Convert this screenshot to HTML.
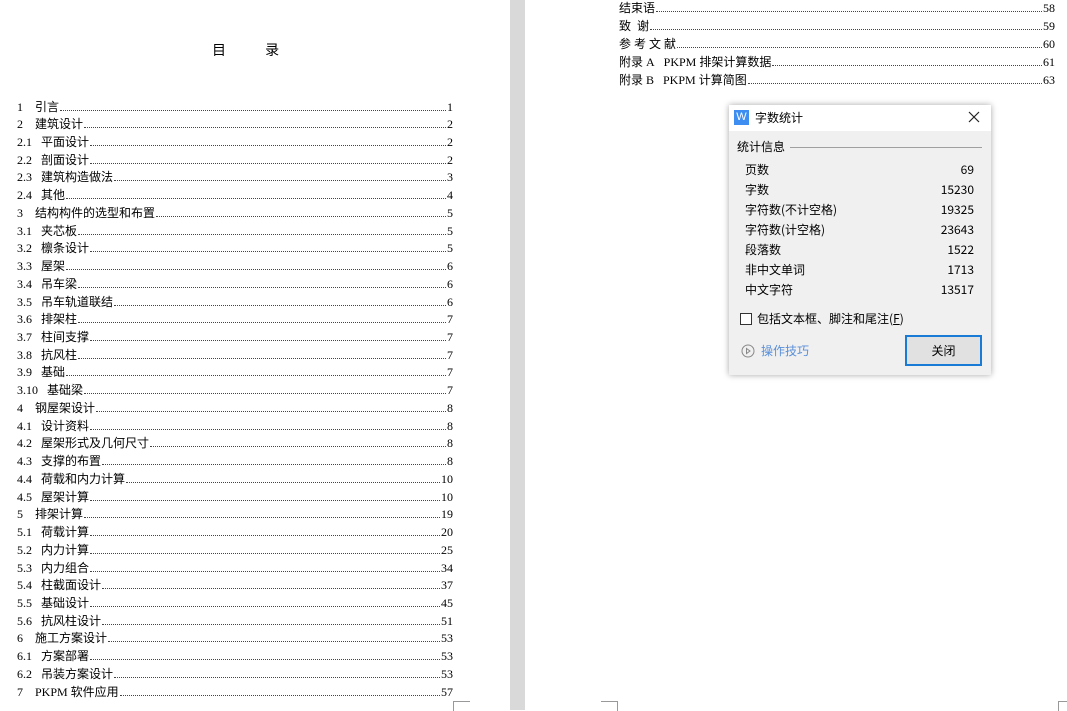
<!DOCTYPE html>
<html><head><meta charset="utf-8"><style>
*{margin:0;padding:0;box-sizing:border-box}
body{width:1067px;height:710px;overflow:hidden;background:#fff;position:relative;font-family:"Liberation Serif","Noto Sans CJK SC",serif;font-size:12px;color:#000}
.gap{position:absolute;left:510px;top:0;width:15px;height:710px;background:#d9d9d9}
.row{position:absolute;height:18px;line-height:18px;display:flex;white-space:nowrap}
.row .n{display:inline-block}
.row .t{font-family:"Liberation Serif","Noto Sans CJK SC",sans-serif}
.row .d{flex:1;border-bottom:1px dotted #444;margin:0 1px 5px 1px}
.L{left:17px;width:436px}
.R{left:619px;width:436px}
.title{position:absolute;left:212px;top:40px;font-size:14px;font-family:"Noto Sans CJK SC",sans-serif;letter-spacing:18px}
.mk{position:absolute;border-color:#999;border-style:solid;width:17px;height:10px}
.dlg{position:absolute;left:729px;top:105px;width:262px;height:270px;background:#f0f0f0;box-shadow:0 0 6px rgba(0,0,0,.35);font-family:"Noto Sans CJK SC",sans-serif;font-size:12px;color:#000}
.tb{height:26px;background:#fff;position:relative}
.ic{position:absolute;left:5px;top:5px;width:15px;height:15px;background:#3d8ef0;color:#fff;font-size:11px;line-height:15px;text-align:center;font-family:"Liberation Sans",sans-serif}
.tt{position:absolute;left:26px;top:4px;font-size:12px}
.x{position:absolute;right:11px;top:6px}
.sec{position:absolute;left:8px;top:33px}
.line{position:absolute;left:61px;right:9px;top:42px;border-top:1px solid #a0a0a0}
.st{position:absolute;left:16px;width:229px;display:flex;justify-content:space-between}
.cb{position:absolute;left:11px;top:208px;width:12px;height:12px;border:1px solid #333;background:#fff}
.cbt{position:absolute;left:28px;top:205px}
.tip{position:absolute;left:12px;top:237px;color:#5a8fd8;display:flex;align-items:center}
.btn{position:absolute;left:176px;top:230px;width:77px;height:31px;border:2px solid #1a7bd6;background:#e1e1e1;text-align:center;line-height:27px}
</style></head><body>
<div class="gap"></div>
<div class="title">目 录</div>
<div class="mk" style="left:453px;top:701px;border-width:1px 0 0 1px"></div>
<div class="mk" style="left:601px;top:701px;border-width:1px 1px 0 0"></div>
<div class="mk" style="left:1058px;top:701px;border-width:1px 0 0 1px;width:9px"></div>

<div id="left"></div>
<div class="row R" style="top:-1px"><span class="t">结束语</span><span class="d"></span><span>58</span></div>
<div class="row R" style="top:17px"><span class="t">致&nbsp;&nbsp;谢</span><span class="d"></span><span>59</span></div>
<div class="row R" style="top:35px"><span class="t">参&nbsp;考&nbsp;文&nbsp;献</span><span class="d"></span><span>60</span></div>
<div class="row R" style="top:53px"><span class="t">附录 A&nbsp;&nbsp;&nbsp;PKPM 排架计算数据</span><span class="d"></span><span>61</span></div>
<div class="row R" style="top:71px"><span class="t">附录 B&nbsp;&nbsp;&nbsp;PKPM 计算简图</span><span class="d"></span><span>63</span></div>

<div class="dlg">
<div class="tb"><div class="ic">W</div><div class="tt">字数统计</div>
<svg class="x" width="12" height="12" viewBox="0 0 12 12"><path d="M1 1L11 11M11 1L1 11" stroke="#222" stroke-width="1.2"/></svg></div>
<div class="sec">统计信息</div><div class="line"></div>
<div class="st" style="top:56px"><span>页数</span><span>69</span></div>
<div class="st" style="top:76px"><span>字数</span><span>15230</span></div>
<div class="st" style="top:96px"><span>字符数(不计空格)</span><span>19325</span></div>
<div class="st" style="top:116px"><span>字符数(计空格)</span><span>23643</span></div>
<div class="st" style="top:136px"><span>段落数</span><span>1522</span></div>
<div class="st" style="top:156px"><span>非中文单词</span><span>1713</span></div>
<div class="st" style="top:176px"><span>中文字符</span><span>13517</span></div>
<div class="cb"></div><div class="cbt">包括文本框、脚注和尾注(<u>F</u>)</div>
<div class="tip"><svg width="14" height="14" viewBox="0 0 14 14" style="margin-right:6px"><circle cx="7" cy="7" r="6" fill="none" stroke="#888"/><path d="M5.5 4.5L9 7L5.5 9.5Z" fill="none" stroke="#888"/></svg>操作技巧</div>
<div class="btn">关闭</div>
</div>

<script>
var L=[["1","引言",1],["2","建筑设计",2],["2.1","平面设计",2],["2.2","剖面设计",2],["2.3","建筑构造做法",3],["2.4","其他",4],["3","结构构件的选型和布置",5],["3.1","夹芯板",5],["3.2","檩条设计",5],["3.3","屋架",6],["3.4","吊车梁",6],["3.5","吊车轨道联结",6],["3.6","排架柱",7],["3.7","柱间支撑",7],["3.8","抗风柱",7],["3.9","基础",7],["3.10","基础梁",7],["4","钢屋架设计",8],["4.1","设计资料",8],["4.2","屋架形式及几何尺寸",8],["4.3","支撑的布置",8],["4.4","荷载和内力计算",10],["4.5","屋架计算",10],["5","排架计算",19],["5.1","荷载计算",20],["5.2","内力计算",25],["5.3","内力组合",34],["5.4","柱截面设计",37],["5.5","基础设计",45],["5.6","抗风柱设计",51],["6","施工方案设计",53],["6.1","方案部署",53],["6.2","吊装方案设计",53],["7","PKPM 软件应用",57]];
var h="";L.forEach(function(r,i){var w=r[0].length==1?18:(r[0].length==3?24:30);h+='<div class="row L" style="top:'+(97.5+i*17.73).toFixed(1)+'px"><span class="n" style="width:'+w+'px">'+r[0]+'</span><span class="t">'+r[1]+'</span><span class="d"></span><span>'+r[2]+'</span></div>';});
document.getElementById("left").innerHTML=h;
</script>
</body></html>
